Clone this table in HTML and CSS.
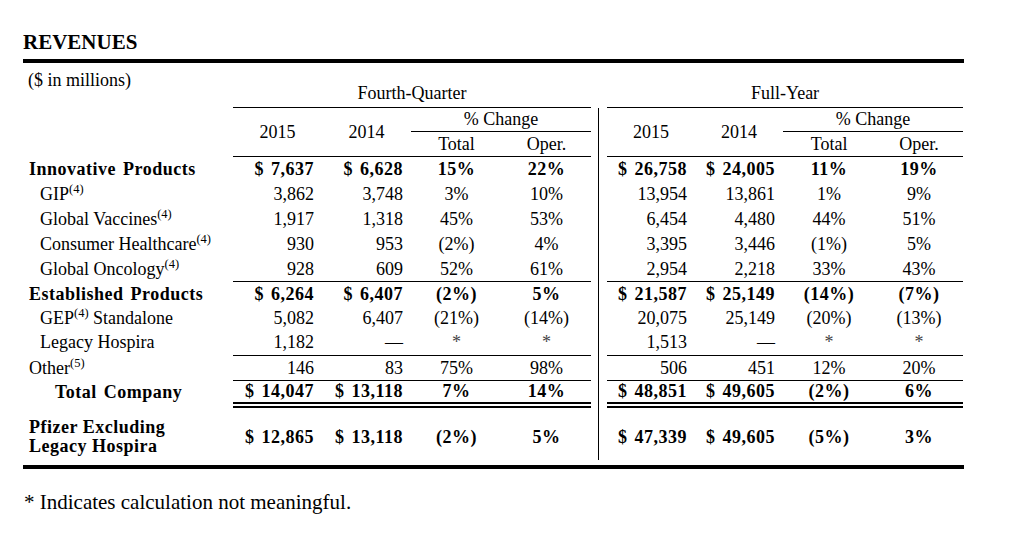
FILE: index.html
```html
<!DOCTYPE html>
<html lang="en">
<head>
<meta charset="utf-8">
<title>Revenues</title>
<link rel="stylesheet" href="styles.css">
</head>
<body>
<div class="page">
  <h1 class="title">REVENUES</h1>
  <div class="rule-top"></div>
  <table class="rev">
    <colgroup>
      <col class="c-label">
      <col class="c-l1"><col class="c-l2"><col class="c-l3"><col class="c-l4">
      <col class="c-sep">
      <col class="c-r1"><col class="c-r2"><col class="c-r3"><col class="c-r4">
    </colgroup>
    <thead>
      <tr class="h1">
        <td class="units">($ in millions)</td>
        <th colspan="4" class="grp">Fourth-Quarter</th>
        <td class="sep-blank"></td>
        <th colspan="4" class="grp">Full-Year</th>
      </tr>
      <tr class="h2">
        <td rowspan="2" class="lbl"></td>
        <th rowspan="2" class="yr">2015</th>
        <th rowspan="2" class="yr">2014</th>
        <th colspan="2" class="chg">% Change</th>
        <td rowspan="2" class="sep"></td>
        <th rowspan="2" class="yr">2015</th>
        <th rowspan="2" class="yr">2014</th>
        <th colspan="2" class="chg">% Change</th>
      </tr>
      <tr class="h3">
        <th class="sub">Total</th><th class="sub">Oper.</th>
        <th class="sub">Total</th><th class="sub">Oper.</th>
      </tr>
    </thead>
    <tbody>
      <tr class="r25 bold">
        <td class="lbl">Innovative Products</td>
        <td class="n">$ 7,637</td><td class="n">$ 6,628</td><td class="p">15%</td><td class="p">22%</td>
        <td class="sep"></td>
        <td class="n">$ 26,758</td><td class="n">$ 24,005</td><td class="p">11%</td><td class="p">19%</td>
      </tr>
      <tr class="r25">
        <td class="lbl sub-lbl">GIP<sup class="fn">(4)</sup></td>
        <td class="n">3,862</td><td class="n">3,748</td><td class="p">3%</td><td class="p">10%</td>
        <td class="sep"></td>
        <td class="n">13,954</td><td class="n">13,861</td><td class="p">1%</td><td class="p">9%</td>
      </tr>
      <tr class="r25">
        <td class="lbl sub-lbl">Global Vaccines<sup class="fn">(4)</sup></td>
        <td class="n">1,917</td><td class="n">1,318</td><td class="p">45%</td><td class="p">53%</td>
        <td class="sep"></td>
        <td class="n">6,454</td><td class="n">4,480</td><td class="p">44%</td><td class="p">51%</td>
      </tr>
      <tr class="r25">
        <td class="lbl sub-lbl">Consumer Healthcare<sup class="fn">(4)</sup></td>
        <td class="n">930</td><td class="n">953</td><td class="p">(2%)</td><td class="p">4%</td>
        <td class="sep"></td>
        <td class="n">3,395</td><td class="n">3,446</td><td class="p">(1%)</td><td class="p">5%</td>
      </tr>
      <tr class="r24 ruled">
        <td class="lbl sub-lbl">Global Oncology<sup class="fn">(4)</sup></td>
        <td class="n">928</td><td class="n">609</td><td class="p">52%</td><td class="p">61%</td>
        <td class="sep"></td>
        <td class="n">2,954</td><td class="n">2,218</td><td class="p">33%</td><td class="p">43%</td>
      </tr>
      <tr class="r24 bold">
        <td class="lbl">Established Products</td>
        <td class="n">$ 6,264</td><td class="n">$ 6,407</td><td class="p">(2%)</td><td class="p">5%</td>
        <td class="sep"></td>
        <td class="n">$ 21,587</td><td class="n">$ 25,149</td><td class="p">(14%)</td><td class="p">(7%)</td>
      </tr>
      <tr class="r24">
        <td class="lbl sub-lbl">GEP<sup class="fn">(4)</sup> Standalone</td>
        <td class="n">5,082</td><td class="n">6,407</td><td class="p">(21%)</td><td class="p">(14%)</td>
        <td class="sep"></td>
        <td class="n">20,075</td><td class="n">25,149</td><td class="p">(20%)</td><td class="p">(13%)</td>
      </tr>
      <tr class="r25 ruled">
        <td class="lbl sub-lbl">Legacy Hospira</td>
        <td class="n">1,182</td><td class="n">—</td><td class="p star">*</td><td class="p star">*</td>
        <td class="sep"></td>
        <td class="n">1,513</td><td class="n">—</td><td class="p star">*</td><td class="p star">*</td>
      </tr>
      <tr class="r24 ruled">
        <td class="lbl">Other<sup class="fn">(5)</sup></td>
        <td class="n">146</td><td class="n">83</td><td class="p">75%</td><td class="p">98%</td>
        <td class="sep"></td>
        <td class="n">506</td><td class="n">451</td><td class="p">12%</td><td class="p">20%</td>
      </tr>
      <tr class="r21 bold total">
        <td class="lbl total-lbl">Total Company</td>
        <td class="n">$ 14,047</td><td class="n">$ 13,118</td><td class="p">7%</td><td class="p">14%</td>
        <td class="sep"></td>
        <td class="n">$ 48,851</td><td class="n">$ 49,605</td><td class="p">(2%)</td><td class="p">6%</td>
      </tr>
      <tr class="bold excl">
        <td class="lbl excl-lbl">Pfizer Excluding<br>Legacy Hospira</td>
        <td class="n">$ 12,865</td><td class="n">$ 13,118</td><td class="p">(2%)</td><td class="p">5%</td>
        <td class="sep"></td>
        <td class="n">$ 47,339</td><td class="n">$ 49,605</td><td class="p">(5%)</td><td class="p">3%</td>
      </tr>
    </tbody>
  </table>
  <div class="rule-bottom"></div>
  <div class="note">* Indicates calculation not meaningful.</div>
</div>
</body>
</html>
```

FILE: styles.css
```css
html, body {
  margin: 0;
  padding: 0;
  background: #ffffff;
}

body {
  font-family: "Liberation Serif", "Times New Roman", serif;
  color: #000;
}

.page {
  width: 941px;
  margin-left: 23px;
}

.title {
  margin: 30px 0 0;
  font-family: "Liberation Serif", "Times New Roman", serif;
  font-size: 21px;
  line-height: 24px;
  font-weight: bold;
}

.rule-top {
  margin-top: 5px;
  height: 4px;
  background: #000;
}

.rule-bottom {
  margin-top: 5px;
  height: 4px;
  background: #000;
}

.note {
  margin: 21px 0 0 1px;
  font-family: "Liberation Serif", "Times New Roman", serif;
  font-size: 21px;
  line-height: 24px;
}

/* table */
.rev {
  width: 940px;
  table-layout: fixed;
  border-collapse: separate;
  border-spacing: 0;
  font-family: "Liberation Serif", "Times New Roman", serif;
  font-size: 18px;
}

.rev th,
.rev td {
  padding: 0;
  font-weight: normal;
  white-space: nowrap;
}

.c-label { width: 210px; }
.c-l1 { width: 89px; }
.c-l2 { width: 89px; }
.c-l3 { width: 91px; }
.c-l4 { width: 89px; }
.c-sep { width: 16px; }
.c-r1 { width: 88px; }
.c-r2 { width: 88px; }
.c-r3 { width: 92px; }
.c-r4 { width: 88px; }

.sep {
  background: linear-gradient(#000, #000) 7px 0 / 1px 100% no-repeat;
}

/* header */
.units {
  vertical-align: top;
  padding: 7px 0 0 5px !important;
  line-height: 20px;
  text-align: left;
}

.grp {
  vertical-align: bottom;
  text-align: center;
  line-height: 20px;
  padding: 20px 0 4px !important;
  border-bottom: 1px solid #000;
}

.chg {
  text-align: center;
  line-height: 23px;
  border-bottom: 1px solid #000;
}

.yr {
  text-align: center;
  vertical-align: middle;
  border-bottom: 1px solid #000;
  line-height: 24px;
}

.sub {
  text-align: center;
  line-height: 24px;
  border-bottom: 1px solid #000;
}

/* body rows */
.r25 { line-height: 25px; }
.r24 { line-height: 24px; }
.r21 { line-height: 21px; }

.ruled > td:not(.lbl):not(.sep) {
  border-bottom: 1px solid #000;
}

.ruled > td.lbl {
  padding-bottom: 1px;
}

.total > td:not(.lbl):not(.sep) {
  border-bottom: 6px double #000;
}

.total > td.lbl {
  padding-bottom: 5px !important;
}

.bold td {
  font-weight: bold;
  letter-spacing: 0.5px;
  word-spacing: 2px;
}

.lbl {
  text-align: left;
  padding-left: 6px !important;
}

.sub-lbl {
  padding-left: 17px !important;
}

.total-lbl {
  padding-left: 32px !important;
}

.n {
  text-align: right;
  padding-right: 8px !important;
}

.p {
  text-align: center;
}

.star {
  color: #444;
}

.fn {
  font-size: 12.5px;
  line-height: 0;
  vertical-align: 7px;
  font-weight: normal;
  letter-spacing: 0;
}

.excl > td {
  vertical-align: middle;
  line-height: 24px;
  padding-top: 6px !important;
}

.excl > td.sep {
  padding-top: 0 !important;
}

.excl > td.excl-lbl {
  vertical-align: top;
  line-height: 19px;
  padding-top: 10px !important;
  padding-bottom: 4px !important;
  word-spacing: 0;
}
```
